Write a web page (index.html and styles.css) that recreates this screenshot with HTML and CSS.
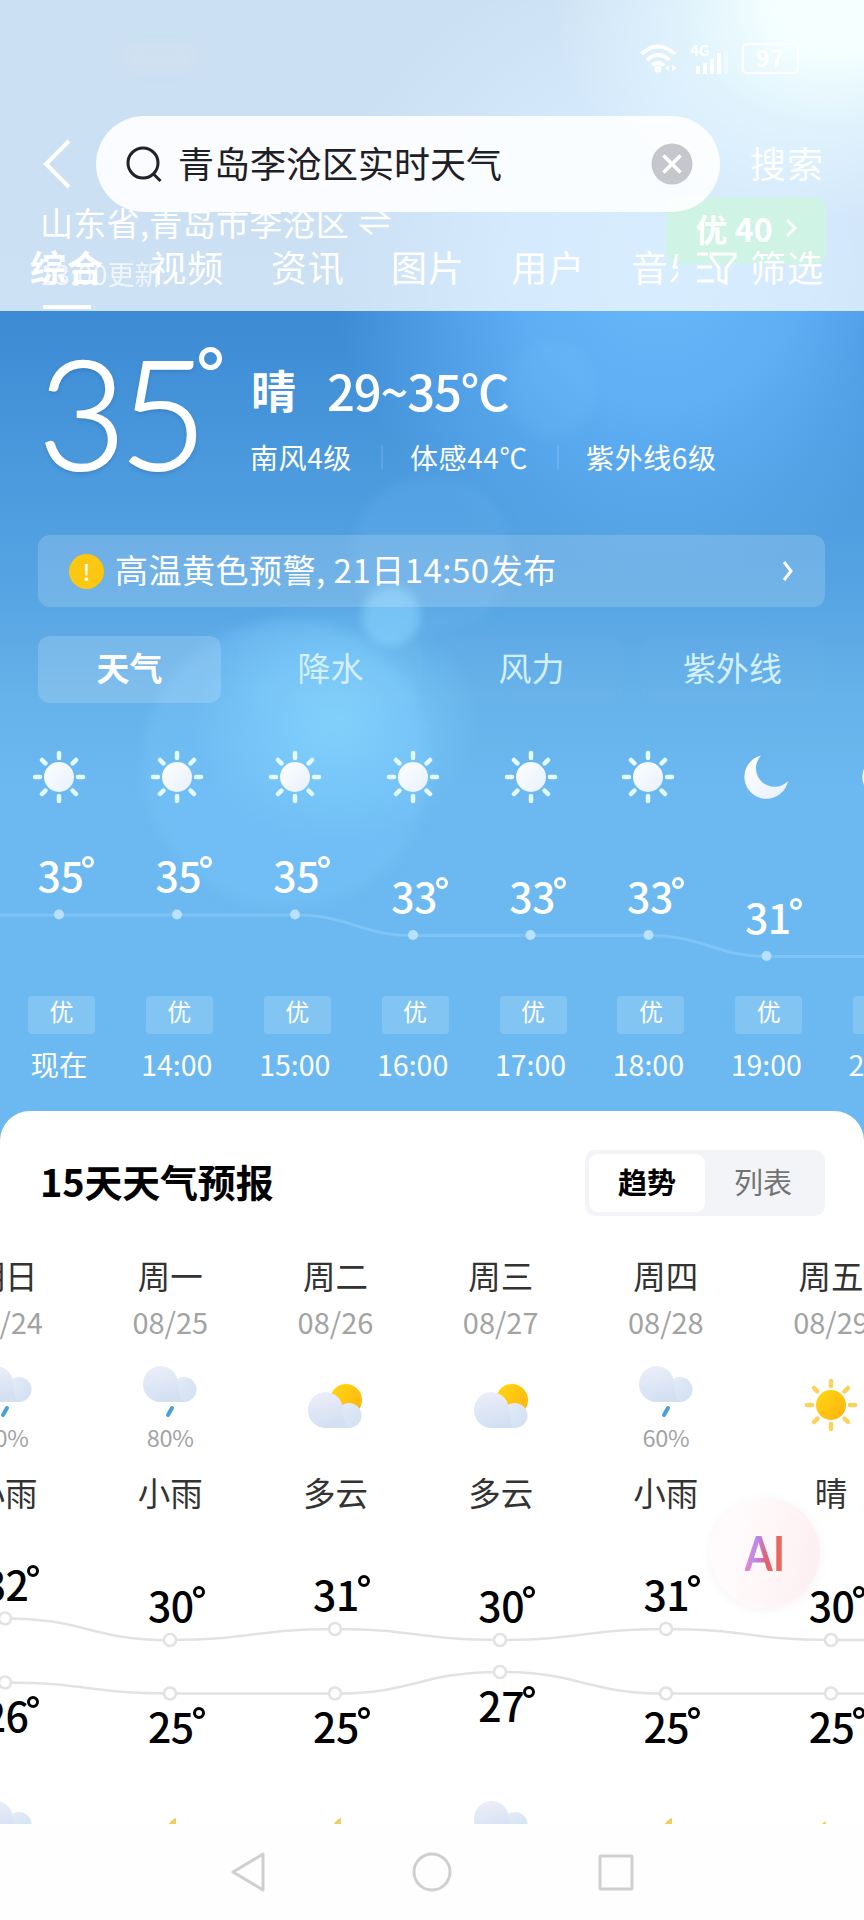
FILE: index.html
```html
<!DOCTYPE html>
<html lang="zh-CN">
<head>
    <meta charset="UTF-8">
    <meta name="viewport" content="width=device-width, initial-scale=1.0">
    <title>青岛李沧区实时天气</title>
    <link rel="stylesheet" href="styles.css">
</head>
<body>

<!-- shared icons -->
<svg class="defs" width="0" height="0">
    <defs>
        <linearGradient id="whiteFill" x1="0" y1="0" x2="1" y2="1">
            <stop offset="0" stop-color="#fff"/>
            <stop offset="1" stop-color="#e6f0fb"/>
        </linearGradient>
        <linearGradient id="sunFill" x1="0" y1="0" x2="1" y2="1">
            <stop offset="0" stop-color="#ffd911"/>
            <stop offset="1" stop-color="#ffb010"/>
        </linearGradient>
        <linearGradient id="cloudFill" x1="0" y1="0" x2="0.3" y2="1">
            <stop offset="0" stop-color="#eeeffa"/>
            <stop offset="1" stop-color="#d3e0f2"/>
        </linearGradient>
        <linearGradient id="puffFill" x1="0" y1="0" x2="1" y2="1">
            <stop offset="0" stop-color="#e6edf8"/>
            <stop offset="1" stop-color="#cfdff2"/>
        </linearGradient>
        <symbol id="rays" viewBox="0 0 54 54">
            <path d="M27 3v5M27 46v5M3 27h5M46 27h5M10 10l3.400 3.400M40.600 40.600L44 44M44 10l-3.400 3.400M13.400 40.600L10 44" fill="none" stroke="currentColor" stroke-width="4.500" stroke-linecap="round"/>
        </symbol>
        <symbol id="sun" viewBox="0 0 54 54">
            <use href="#rays"/>
            <circle cx="27" cy="27" r="15" fill="url(#whiteFill)"/>
        </symbol>
        <symbol id="moon" viewBox="0 0 54 54">
            <path d="M22 5.500A22 22 0 1 0 49 31A18.500 18.500 0 0 1 22 5.500z" fill="url(#whiteFill)"/>
        </symbol>
        <symbol id="cloud" viewBox="0 0 54 36">
            <circle cx="41" cy="23.500" r="12.500" fill="url(#puffFill)"/>
            <path d="M17.500 36A17.500 18 0 1 1 34.500 14Q37 36 41 36z" fill="url(#cloudFill)"/>
        </symbol>
        <symbol id="rain" viewBox="0 0 54 54">
            <use href="#cloud" width="54" height="36"/>
            <path d="M29 42l-4 7" stroke="#4a9fd6" stroke-width="4" stroke-linecap="round"/>
        </symbol>
        <symbol id="cloudy" viewBox="0 0 54 46">
            <circle cx="38" cy="18" r="16" fill="url(#sunFill)"/>
            <use href="#cloud" y="10" width="54" height="36"/>
        </symbol>
        <symbol id="sunny" viewBox="0 0 54 54">
            <g color="#f9d35c"><use href="#rays"/></g>
            <circle cx="27" cy="27" r="15" fill="url(#sunFill)"/>
        </symbol>
    </defs>
</svg>

<div class="phone">

    <section class="sky">
        <div class="flare flare-top"></div>
        <div class="flare flare-corner"></div>
        <div class="flare flare-ring"></div>
        <div class="flare flare-mid"></div>
        <div class="flare flare-big"></div>
        <div class="flare flare-core"></div>
        <div class="flare flare-small"></div>

        <div class="place">
            <div>
                <p class="place-name">山东省,青岛市李沧区
                    <svg width="32" height="26" viewBox="0 0 32 26"><path d="M2 9h27L19 1M30 17H3l10 8" fill="none" stroke="#fff" stroke-width="2.500"/></svg>
                </p>
                <p class="place-time">13:00更新</p>
            </div>
            <div class="air">优 40
                <svg width="12" height="20" viewBox="0 0 12 20"><path d="M2 2l8 8-8 8" fill="none" stroke="#fff" stroke-width="3"/></svg>
            </div>
        </div>

        <div class="now">
            <div class="now-temp">35<i class="deg"></i></div>
            <div class="now-info">
                <p class="now-main"><span>晴</span><span class="range">29~35℃</span></p>
                <p class="now-sub"><span>南风4级</span><i></i><span>体感44℃</span><i></i><span>紫外线6级</span></p>
            </div>
        </div>

        <div class="alert">
            <span class="alert-icon">!</span>
            <span class="alert-text">高温黄色预警, <span>21日14:50发布</span></span>
            <svg width="14" height="24" viewBox="0 0 14 24"><path d="M3 3l7 9-7 9" fill="none" stroke="#fff" stroke-width="3"/></svg>
        </div>

        <div class="tabs">
            <span class="tab active">天气</span>
            <span class="tab">降水</span>
            <span class="tab">风力</span>
            <span class="tab">紫外线</span>
        </div>

        <div class="hours">
            <svg class="hours-line" width="864" height="80" viewBox="0 0 864 80">
                <path d="M0 15H295C350 15 360 35.500 413 35.500H649C705 35.500 715 56.500 767 56.500H864" fill="none" stroke="#8acbf8" stroke-width="3" opacity=".6"/>
                <g fill="#b9e0fc">
                    <circle cx="59" cy="14.500" r="5"/><circle cx="177" cy="14.500" r="5"/><circle cx="295" cy="14.500" r="5"/>
                    <circle cx="413" cy="35" r="5"/><circle cx="530.500" cy="35" r="5"/><circle cx="648.500" cy="35" r="5"/>
                    <circle cx="766.500" cy="56" r="5"/>
                </g>
            </svg>
            <div class="hour"><svg><use href="#sun"/></svg><b style="margin-top: 47px">35<i class="deg"></i></b><em>优</em><span>现在</span></div>
            <div class="hour"><svg><use href="#sun"/></svg><b style="margin-top: 47px">35<i class="deg"></i></b><em>优</em><span>14:00</span></div>
            <div class="hour"><svg><use href="#sun"/></svg><b style="margin-top: 47px">35<i class="deg"></i></b><em>优</em><span>15:00</span></div>
            <div class="hour"><svg><use href="#sun"/></svg><b style="margin-top: 68px">33<i class="deg"></i></b><em>优</em><span>16:00</span></div>
            <div class="hour"><svg><use href="#sun"/></svg><b style="margin-top: 68px">33<i class="deg"></i></b><em>优</em><span>17:00</span></div>
            <div class="hour"><svg><use href="#sun"/></svg><b style="margin-top: 68px">33<i class="deg"></i></b><em>优</em><span>18:00</span></div>
            <div class="hour"><svg><use href="#moon"/></svg><b style="margin-top: 89px">31<i class="deg"></i></b><em>优</em><span>19:00</span></div>
            <div class="hour"><svg><use href="#moon"/></svg><b></b><em></em><span>20:00</span></div>
        </div>
    </section>

    <section class="forecast">
        <div class="forecast-head">
            <h2>15天天气预报</h2>
            <div class="switch"><span class="on">趋势</span><span>列表</span></div>
        </div>

        <div class="days">
            <svg class="days-line" width="864" height="110" viewBox="0 0 864 110">
                <g fill="none" stroke="#e2e2e2" stroke-width="2.500">
                    <path d="M5 18.500C85 18.500 90 40 170 40S255 29 335 29S420 40 500 40S586 29 666 29S751 40 831 40H864"/>
                    <path d="M5 82.500C85 82.500 90 93.500 170 93.500H335C415 93.500 420 72 500 72S586 93.500 666 93.500H864"/>
                </g>
                <g fill="#fff" stroke="#e2e2e2" stroke-width="2.500">
                    <circle cx="5" cy="18.500" r="6"/><circle cx="170" cy="40" r="6"/><circle cx="335" cy="29" r="6"/>
                    <circle cx="500" cy="40" r="6"/><circle cx="666" cy="29" r="6"/><circle cx="831" cy="40" r="6"/>
                    <circle cx="5" cy="82.500" r="6"/><circle cx="170" cy="93.500" r="6"/><circle cx="335" cy="93.500" r="6"/>
                    <circle cx="500" cy="72" r="6"/><circle cx="666" cy="93.500" r="6"/><circle cx="831" cy="93.500" r="6"/>
                </g>
            </svg>

            <div class="day">
                <span class="week">明日</span><span class="date">08/24</span>
                <div class="icon"><svg width="54" height="54"><use href="#rain"/></svg><small>80%</small></div>
                <span class="desc">小雨</span>
                <div class="high"><b style="margin-top: 45px">32<i class="deg"></i></b></div>
                <div class="low"><b style="margin-top: 32px">26<i class="deg"></i></b></div>
                <svg class="night" width="54" height="54"><use href="#rain"/></svg>
            </div>
            <div class="day">
                <span class="week">周一</span><span class="date">08/25</span>
                <div class="icon"><svg width="54" height="54"><use href="#rain"/></svg><small>80%</small></div>
                <span class="desc">小雨</span>
                <div class="high"><b style="margin-top: 66px">30<i class="deg"></i></b></div>
                <div class="low"><b style="margin-top: 43px">25<i class="deg"></i></b></div>
                <svg class="night" width="54" height="54"><path d="M33 17Q29 18 25 24h8z" fill="#f0cf60"/></svg>
            </div>
            <div class="day">
                <span class="week">周二</span><span class="date">08/26</span>
                <div class="icon mid"><svg width="54" height="46"><use href="#cloudy"/></svg></div>
                <span class="desc">多云</span>
                <div class="high"><b style="margin-top: 55px">31<i class="deg"></i></b></div>
                <div class="low"><b style="margin-top: 43px">25<i class="deg"></i></b></div>
                <svg class="night" width="54" height="54"><path d="M33 17Q29 18 25 24h8z" fill="#f0cf60"/></svg>
            </div>
            <div class="day">
                <span class="week">周三</span><span class="date">08/27</span>
                <div class="icon mid"><svg width="54" height="46"><use href="#cloudy"/></svg></div>
                <span class="desc">多云</span>
                <div class="high"><b style="margin-top: 66px">30<i class="deg"></i></b></div>
                <div class="low"><b style="margin-top: 22px">27<i class="deg"></i></b></div>
                <svg class="night" width="54" height="54"><use href="#rain"/></svg>
            </div>
            <div class="day">
                <span class="week">周四</span><span class="date">08/28</span>
                <div class="icon"><svg width="54" height="54"><use href="#rain"/></svg><small>60%</small></div>
                <span class="desc">小雨</span>
                <div class="high"><b style="margin-top: 55px">31<i class="deg"></i></b></div>
                <div class="low"><b style="margin-top: 43px">25<i class="deg"></i></b></div>
                <svg class="night" width="54" height="54"><path d="M33 17Q29 18 25 24h8z" fill="#f0cf60"/></svg>
            </div>
            <div class="day">
                <span class="week">周五</span><span class="date">08/29</span>
                <div class="icon mid"><svg width="54" height="54"><use href="#sunny"/></svg></div>
                <span class="desc">晴</span>
                <div class="high"><b style="margin-top: 66px">30<i class="deg"></i></b></div>
                <div class="low"><b style="margin-top: 43px">25<i class="deg"></i></b></div>
                <svg class="night" width="54" height="54"><path d="M21 20l-4 4h6z" fill="#f0cf60"/></svg>
            </div>
        </div>
    </section>

    <nav class="keys">
        <svg width="36" height="40" viewBox="0 0 36 40"><path d="M3 20L33 2v36z" fill="none" stroke="#cfcfcf" stroke-width="3" stroke-linejoin="round"/></svg>
        <svg width="40" height="40" viewBox="0 0 40 40"><circle cx="20" cy="20" r="18" fill="none" stroke="#cfcfcf" stroke-width="3"/></svg>
        <svg width="36" height="40" viewBox="0 0 36 40"><rect x="2" y="4" width="32" height="33" rx="1" fill="none" stroke="#cfcfcf" stroke-width="3"/></svg>
    </nav>

    <!-- translucent search bar on top of the page -->
    <header class="top">
        <div class="status">
            <span class="smudge"></span>
            <svg width="38" height="30" viewBox="0 0 38 30">
                <g fill="none" stroke="#fff" stroke-width="4">
                    <path d="M1.500 11Q18 -4 35 11"/><path d="M7 17Q18 7 29.500 17"/><path d="M12.500 22.500Q18 17 24 22.500"/>
                </g>
                <circle cx="18" cy="26" r="3.500" fill="#fff"/><path d="M25 25l4-3v6zM37 25l-5-3v6z" fill="#fff"/>
            </svg>
            <div class="signal">
                <small>4G</small>
                <svg width="36" height="24" viewBox="0 0 36 24"><path d="M2 16h4v8H2zM9 13h4v11H9zM16 9h4v15h-4zM23 3h4v21h-4z" fill="#fff"/><path d="M30 1h4v23h-4z" fill="#fff" opacity=".4"/></svg>
            </div>
            <div class="battery">97</div>
        </div>
        <div class="search">
            <svg width="30" height="52" viewBox="0 0 30 52"><path d="M27 3L4 26l23 23" fill="none" stroke="#fff" stroke-width="4"/></svg>
            <div class="box">
                <svg width="38" height="38" viewBox="0 0 38 38"><circle cx="17" cy="18" r="15" fill="none" stroke="#20222a" stroke-width="3"/><path d="M27.500 29l7 7" stroke="#20222a" stroke-width="3"/></svg>
                <span>青岛李沧区实时天气</span>
                <svg width="42" height="42" viewBox="0 0 42 42"><circle cx="21" cy="21" r="20.500" fill="#c6c7cc"/><path d="M12.500 12.500l17 17M29.500 12.500l-17 17" stroke="#fff" stroke-width="3.500"/></svg>
            </div>
            <span class="go">搜索</span>
        </div>
        <div class="menu">
            <div class="menu-list">
                <span class="cur">综合</span><span>视频</span><span>资讯</span><span>图片</span><span>用户</span><span>音乐</span>
            </div>
            <svg width="42" height="36" viewBox="0 0 42 36"><path d="M1 3h11M1 16h15M1 30h17M15 3h24v3L30 17v15l-7-3V17L15 6z" fill="none" stroke="#fff" stroke-width="3"/></svg>
            <span>筛选</span>
        </div>
    </header>

    <div class="ai"><span>AI</span></div>
</div>

</body>
</html>
```
FILE: styles.css
```css
body {
    margin: 0;
    background-color: #fff;
    font-family: "Noto Sans CJK SC", "Noto Sans", sans-serif;
}
p, h2 {
    margin: 0;
}
i, em {
    font-style: normal;
}
svg {
    display: block;
    flex-shrink: 0;
}
.defs {
    position: absolute;
}
.phone {
    position: relative;
    width: 864px;
    height: 1920px;
    overflow: hidden;
    display: flex;
    flex-direction: column;
}

/* sky */
.sky {
    position: relative;
    box-sizing: border-box;
    height: 1150px;
    flex-shrink: 0;
    padding-top: 197px;
    overflow: hidden;
    color: #fff;
    background: linear-gradient(#3a86d0 0, #3c8ad3 310px, #4a99dd 460px, #57a5e3 600px, #66b2ea 700px, #6bb9f0 790px);
}
.sky > div {
    position: relative;
}
.sky > .flare {
    position: absolute;
    border-radius: 50%;
}
.flare-top {
    left: 330px;
    top: -60px;
    width: 660px;
    height: 640px;
    background: radial-gradient(closest-side, rgba(110,190,255,.9), rgba(105,185,255,.75) 45%, rgba(105,185,255,0));
}
.flare-corner {
    right: -250px;
    top: -200px;
    width: 560px;
    height: 420px;
    background: radial-gradient(closest-side, rgba(215,255,255,1) 20%, rgba(170,240,255,.6) 55%, rgba(140,220,255,0));
}
.flare-ring {
    left: 508px;
    top: 340px;
    width: 88px;
    height: 96px;
    background: rgba(130,200,255,.15);
    filter: blur(7px);
}
.flare-mid {
    left: 352px;
    top: 475px;
    width: 160px;
    height: 160px;
    background: rgba(130,200,255,.13);
    filter: blur(6px);
}
.flare-big {
    left: 143px;
    top: 620px;
    width: 288px;
    height: 288px;
    background: rgba(125,200,255,.33);
    filter: blur(6px);
}
.flare-core {
    left: 190px;
    top: 600px;
    width: 290px;
    height: 240px;
    background: radial-gradient(closest-side, rgba(140,220,255,.65), rgba(130,210,255,.45) 55%, rgba(125,200,255,0));
}
.flare-small {
    left: 362px;
    top: 586px;
    width: 58px;
    height: 60px;
    background: rgba(140,215,255,.55);
    filter: blur(5px);
}
.place {
    display: flex;
    justify-content: space-between;
    height: 129px;
    padding: 0 38px 0 40px;
}
.place-name {
    display: flex;
    gap: 10px;
    align-items: center;
    font-size: 33px;
    line-height: 50px;
    letter-spacing: .3px;
}
.place-time {
    margin-top: 4px;
    font-size: 27px;
    line-height: 46px;
    opacity: .7;
}
.air {
    display: flex;
    align-items: center;
    justify-content: center;
    gap: 12px;
    box-sizing: border-box;
    width: 160px;
    height: 67px;
    padding-bottom: 5px;
    border-radius: 12px;
    background: #48d298;
    font-size: 32px;
    font-weight: 700;
}
.now {
    display: flex;
    height: 209px;
}
.now-temp {
    display: flex;
    width: 213px;
    padding-left: 38px;
    font-family: Lato, sans-serif;
    font-size: 152px;
    font-weight: 300;
    letter-spacing: -7px;
    line-height: 170px;
    -webkit-text-stroke: 2px #fff;
    text-shadow: 0 2px 4px rgba(30,80,140,.4);
}
.now-temp .deg {
    width: 13px;
    height: 13px;
    margin: 21px 0 0 -1px;
    border-width: 5px;
}
.deg {
    display: inline-block;
    box-sizing: content-box;
    width: 6px;
    height: 6px;
    border: 3px solid currentColor;
    border-radius: 50%;
}
.now-main {
    display: flex;
    gap: 31px;
    padding: 31px 0 0 0;
    font-size: 45px;
    font-weight: 700;
    line-height: 66px;
}
.range {
    font-size: 49px;
    font-weight: 500;
    letter-spacing: -1.2px;
}
.now-sub {
    display: flex;
    align-items: center;
    margin-top: 14px;
    margin-left: -1px;
    font-size: 28px;
    line-height: 40px;
    letter-spacing: .6px;
}
.now-sub i {
    width: 2px;
    height: 24px;
    margin: 0 27px 0 29px;
    background: rgba(255,255,255,.12);
}
.alert {
    display: flex;
    align-items: center;
    box-sizing: border-box;
    width: 787px;
    height: 72px;
    margin-left: 38px;
    padding: 0 30px 0 31px;
    border-radius: 12px;
    background: rgba(255,255,255,.17);
    font-size: 33px;
}
.alert-icon {
    width: 35px;
    height: 35px;
    border-radius: 50%;
    background: #fcc710;
    font-size: 22px;
    font-weight: 500;
    line-height: 34px;
    text-align: center;
}
.alert-text {
    flex: 1;
    margin: -5px 0 0 11px;
    line-height: 50px;
    letter-spacing: .5px;
}
.tabs {
    display: grid;
    grid-template-columns: repeat(4, 183px);
    gap: 18px;
    margin: 29px 0 0 38px;
}
.tab {
    height: 67px;
    border-radius: 12px;
    background: rgba(255,255,255,.02);
    color: #d3f0ff;
    font-size: 33px;
    line-height: 62px;
    text-align: center;
}
.tab.active {
    background: rgba(255,255,255,.17);
    color: #fff;
    font-weight: 700;
}
.hours {
    display: flex;
    margin-top: 47px;
    width: 944px;
}
.hours-line {
    position: absolute;
    left: 0;
    top: 150px;
}
.hour {
    position: relative;
    display: grid;
    grid-template-rows: 54px 192px 38px 63px;
    justify-items: center;
    width: 117.9px;
    flex-shrink: 0;
}
.hour svg {
    width: 54px;
    height: 54px;
    color: #e4fbff;
}
.hour b, .day b {
    display: flex;
    height: 46px;
    margin-left: 14px;
    font-size: 41px;
    font-weight: 500;
    line-height: 46px;
    letter-spacing: -.5px;
}
b .deg {
    margin: 5px 0 0 -1px;
}
.hour em {
    width: 67px;
    margin-left: 5px;
    border-radius: 4px;
    background: rgba(255,255,255,.16);
    font-size: 24px;
    line-height: 29px;
    text-align: center;
}
.hour span {
    font-size: 28.5px;
    line-height: 59px;
}

/* forecast */
.forecast {
    position: relative;
    height: 713px;
    margin-top: -39px;
    flex-shrink: 0;
    border-radius: 30px 30px 0 0;
    background: #fff;
    overflow: hidden;
}
.forecast-head {
    display: flex;
    justify-content: space-between;
    padding: 39px 39px 0 40px;
}
h2 {
    font-size: 38px;
    font-weight: 700;
    line-height: 61px;
    letter-spacing: -.2px;
}
.switch {
    display: grid;
    grid-template-columns: 116px 116px;
    box-sizing: border-box;
    width: 240px;
    height: 66px;
    padding: 4px;
    border-radius: 10px;
    background: #f3f4f7;
    color: #737373;
    font-size: 29px;
    line-height: 54px;
    text-align: center;
}
.switch span {
    border-radius: 9px;
}
.switch .on {
    background: #fff;
    color: #000;
    font-weight: 700;
}
.days {
    display: flex;
    width: 992px;
    margin: 33px 0 0 -77.5px;
}
.days-line {
    position: absolute;
    left: 0;
    top: 489px;
}
.day {
    display: flex;
    flex-direction: column;
    align-items: center;
    width: 165.2px;
    color: #333;
    font-size: 32.5px;
}
.week {
    height: 51px;
    line-height: 52px;
}
.date {
    height: 50px;
    color: #a3a3a3;
    font-size: 29px;
    line-height: 43px;
}
.icon {
    display: flex;
    flex-direction: column;
    align-items: center;
    box-sizing: border-box;
    height: 105px;
    padding-top: 16px;
}
.icon.mid {
    justify-content: center;
    padding: 5px 0 0;
}
.icon small {
    color: #a3a3a3;
    font-size: 23.5px;
    line-height: 34px;
    letter-spacing: -.3px;
}
.desc {
    height: 60px;
    line-height: 73px;
}
.high {
    height: 144px;
}
.low {
    height: 146px;
}
.day b {
    color: #000;
    margin-left: 12px;
}
.night {
    margin-top: -4px;
}

/* system keys */
.keys {
    display: flex;
    justify-content: center;
    align-items: center;
    gap: 146px;
    height: 96px;
    background: #fefefe;
}

/* header */
.top {
    position: absolute;
    left: 0;
    top: 0;
    width: 864px;
    height: 311px;
    background: rgba(255,255,255,.74);
    color: #fff;
}
.status {
    display: flex;
    align-items: center;
    height: 116px;
}
.smudge {
    width: 70px;
    height: 22px;
    margin: 0 445px 0 125px;
    background: rgba(232,228,232,.22);
    filter: blur(8px);
}
.signal {
    display: flex;
    flex-direction: column;
    width: 50px;
    margin-left: 12px;
}
.signal small {
    height: 10px;
    font-size: 15px;
    font-weight: 700;
    line-height: 13px;
}
.signal svg {
    margin-top: -3px;
    margin-left: 4px;
}
.battery {
    box-sizing: border-box;
    width: 57px;
    height: 31px;
    margin-left: 2px;
    border: 2.5px solid #fff;
    border-radius: 5px;
    font-size: 23px;
    font-weight: 700;
    line-height: 24px;
    letter-spacing: 1px;
    text-align: center;
}
.search {
    display: flex;
    align-items: center;
    height: 96px;
    padding-left: 42px;
    font-size: 36px;
}
.box {
    display: flex;
    align-items: center;
    box-sizing: border-box;
    width: 624px;
    height: 96px;
    margin-left: 24px;
    padding: 0 27px 0 30px;
    border-radius: 48px;
    background: rgba(253,254,255,.93);
    color: #1f2025;
}
.box span {
    flex: 1;
    margin: -5px 0 0 14px;
}
.go {
    margin: -5px 0 0 30px;
    letter-spacing: 1px;
}
.menu {
    display: flex;
    align-items: center;
    height: 99px;
    padding-left: 30px;
    font-size: 36px;
    letter-spacing: 1px;
}
.menu > svg {
    margin: 14px 12px 0 18px;
}
.menu > span, .menu-list span {
    line-height: 54px;
    padding-top: 9px;
}
.menu-list {
    display: flex;
    gap: 46.3px;
    width: 648px;
    height: 99px;
    align-items: center;
    overflow: hidden;
    white-space: nowrap;
}
.cur {
    position: relative;
    font-weight: 700;
}
.cur::after {
    content: "";
    position: absolute;
    left: 13px;
    bottom: -16px;
    width: 48px;
    height: 4px;
    background: #fff;
}

/* floating assistant button */
.ai {
    position: absolute;
    left: 710px;
    top: 1498px;
    width: 110px;
    height: 110px;
    border-radius: 50%;
    background: linear-gradient(100deg, #fffafb 30%, #fdeef1);
    box-shadow: 0 2px 12px rgba(0,0,0,.05);
    text-align: center;
}
.ai span {
    display: inline-block;
    background: linear-gradient(95deg, #ea86c0 10%, #b98af0 32%, #e0606c 55%, #ee7050);
    -webkit-background-clip: text;
    background-clip: text;
    color: transparent;
    font-family: Lato, sans-serif;
    font-size: 48px;
    font-weight: 700;
    line-height: 110px;
    transform: scaleX(.85);
}
```
